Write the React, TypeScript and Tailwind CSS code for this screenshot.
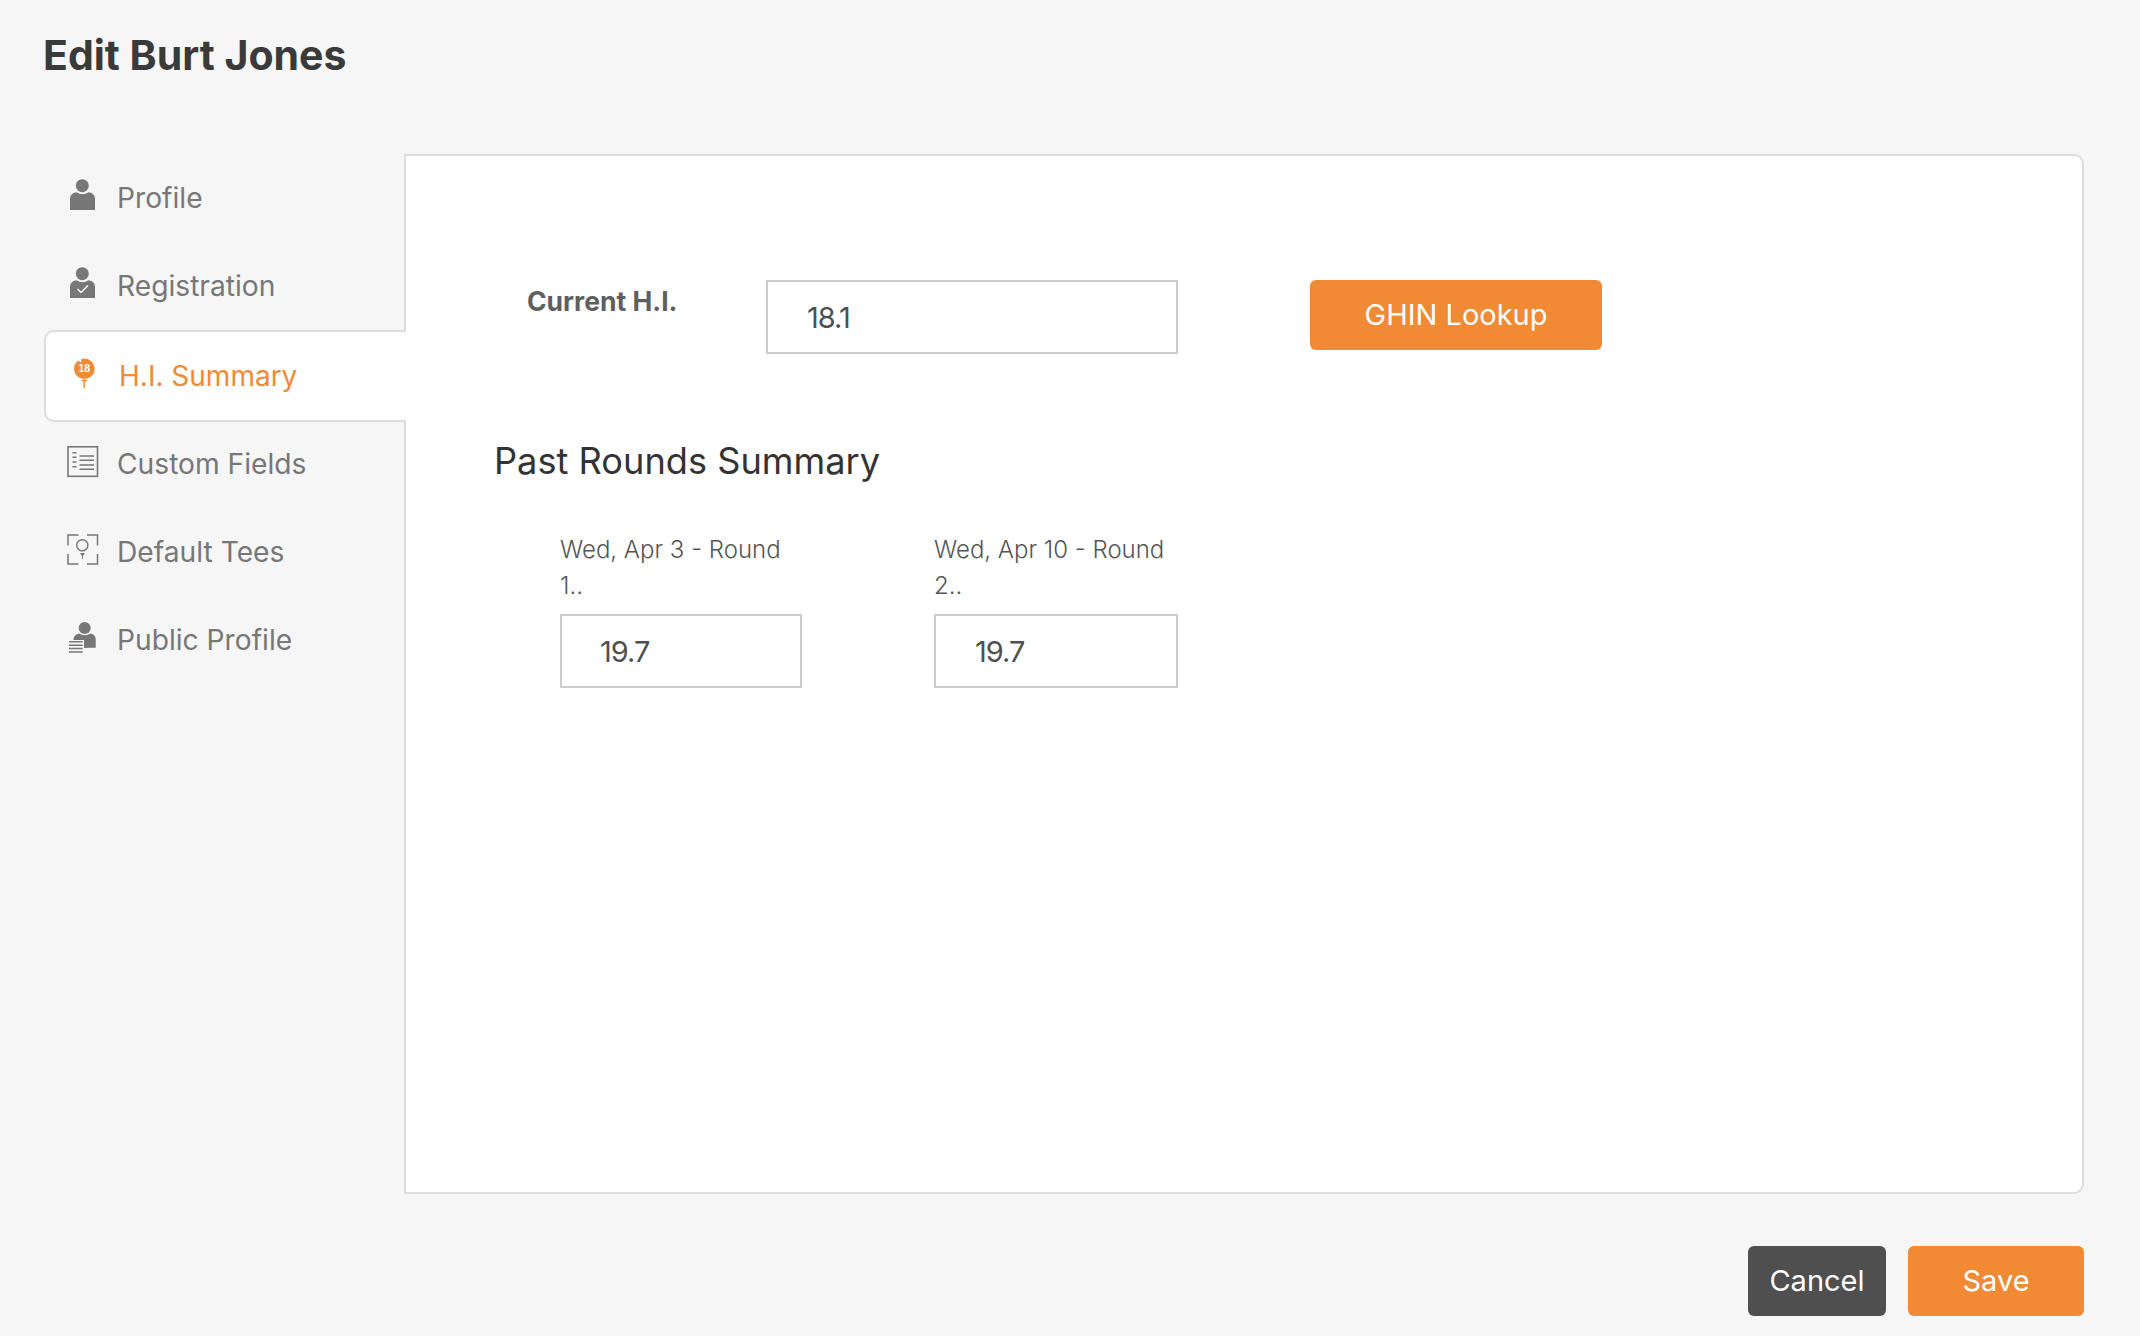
import React from "react";

const G = "#777777";
const Box = ({ children }: { children: React.ReactNode }) => (
  <svg width="32" height="36" viewBox="0 0 32 36" className="shrink-0 -mt-[8px]">{children}</svg>
);
const Person = () => (
  <>
    <circle cx="15.3" cy="9.7" r="6.5" fill={G} />
    <path d="M3 34V22.5Q3 17.5 9.5 16.3Q15.5 20 21.5 16.3Q28 17.5 28 22.5V34Z" fill={G} />
  </>
);
const ProfileIcon = () => <Box><Person /></Box>;
const RegIcon = () => (
  <Box>
    <Person />
    <path d="M10.5 25L14 28.5L21 21.5" fill="none" stroke="#f6f6f6" strokeWidth="1.5" />
  </Box>
);
const TeeBall = () => (
  <Box>
    <circle cx="17.3" cy="14.7" r="10.3" fill="#f18a34" />
    <path d="M10 6L14.5 3.8L14 8.5Z" fill="#ffffff" />
    <text x="17.3" y="18.4" textAnchor="middle" fontSize="10.5" fontWeight="700" fill="#ffffff" fontFamily="'Liberation Sans',sans-serif">18</text>
    <path d="M14.5 26.5H20M17.3 26.5V34" stroke="#f18a34" strokeWidth="1.4" fill="none" />
  </Box>
);
const FieldsIcon = () => (
  <Box>
    <rect x="1" y="4.8" width="29.5" height="29.5" fill="none" stroke={G} strokeWidth="1.6" />
    <path d="M5.5 10.7H9.5M5.5 15.3H9.5M5.5 20H9.5M5.5 24.7H9.5" stroke={G} strokeWidth="1.4" />
    <path d="M12.5 14H27M12.5 18.3H27M12.5 23H27M12.5 27.3H27" stroke={G} strokeWidth="1.4" />
  </Box>
);
const TeesIcon = () => (
  <Box>
    <path d="M11.5 5H1V15.5M1 24V34H11.5M20 34H30.5V24M30.5 15.5V5H20" fill="none" stroke={G} strokeWidth="1.5" />
    <circle cx="15.3" cy="15.3" r="5.6" fill="none" stroke={G} strokeWidth="1.4" />
    <path d="M13 23H18L16 26V29H15V26Z" fill={G} />
  </Box>
);
const PublicIcon = () => (
  <Box>
    <circle cx="17.7" cy="10" r="6" fill={G} />
    <path d="M6.5 30V21Q7 16.5 12 15.5Q17.7 19 23.5 15.5Q28.7 16.5 28.7 21V29.7Z" fill={G} />
    <rect x="1" y="22" width="16" height="14" fill="#f6f6f6" />
    <path d="M2 23.8H15.7M2 27.2H15.7M2 30.6H15.7M2 34H15.7" stroke={G} strokeWidth="1.5" />
  </Box>
);

const NavRow = ({ icon, label }: { icon: React.ReactNode; label: string }) => (
  <div className="h-[88px] flex items-center pl-[23px] gap-[18px] text-[#777777]">
    {icon}
    <span className="text-[28.2px] leading-none font-normal">{label}</span>
  </div>
);

const inputCls =
  "h-[74px] border-2 border-[#cccccc] bg-white text-[29px] tracking-[-1px] text-[#4f4f4f] outline-none";

export default function App() {
  return (
    <div
      className="w-[2140px] h-[1336px] bg-[#f6f6f6] overflow-hidden"
      style={{ fontFamily: "Inter, 'Open Sans', sans-serif" }}
    >
      <header className="h-[154px] pl-[43px] pt-[30px]">
        <h1 className="text-[41px] leading-[50px] font-bold text-[#3a3a3a]">Edit Burt Jones</h1>
      </header>

      <div className="flex pl-[44px] pr-[56px] h-[1040px]">
        <nav className="w-[360px] shrink-0 relative z-10">
          <NavRow icon={<ProfileIcon />} label="Profile" />
          <NavRow icon={<RegIcon />} label="Registration" />
          <div className="h-[92px] -mb-[2px] -mr-[2px] relative flex items-center pl-[21px] gap-[20px] bg-white border-2 border-r-0 border-[#dddddd] rounded-l-[10px] text-[#f18a34]">
            <TeeBall />
            <span className="text-[28px] leading-none font-normal">H.I. Summary</span>
          </div>
          <NavRow icon={<FieldsIcon />} label="Custom Fields" />
          <NavRow icon={<TeesIcon />} label="Default Tees" />
          <NavRow icon={<PublicIcon />} label="Public Profile" />
        </nav>

        <main className="flex-1 bg-white border-2 border-[#dddddd] rounded-r-[10px] pt-[124px] pl-[88px]">
          <div className="flex items-start">
            <label className="w-[239px] ml-[33px] pt-[3px] text-[26.5px] leading-[36px] font-bold text-[#5f5f5f]">Current H.I.</label>
            <input readOnly value="18.1" className={`${inputCls} w-[412px] pl-[39px] mr-[132px]`} />
            <button className="w-[292px] h-[70px] rounded-[6px] bg-[#f18a34] text-white text-[29px]">GHIN Lookup</button>
          </div>

          <h2 className="mt-[82px] text-[36.2px] leading-[50px] text-[#333333]">Past Rounds Summary</h2>

          <div className="flex mt-[46px] ml-[66px]">
            <div className="w-[374px]">
              <p className="text-[24px] font-light leading-[36px] text-[#555555] whitespace-nowrap">Wed, Apr 3 - Round<br />1..</p>
              <input readOnly value="19.7" className={`${inputCls} w-[242px] pl-[38px] mt-[10px] block`} />
            </div>
            <div className="w-[274px]">
              <p className="text-[24px] font-light leading-[36px] text-[#555555] whitespace-nowrap">Wed, Apr 10 - Round<br />2..</p>
              <input readOnly value="19.7" className={`${inputCls} w-[244px] pl-[39px] mt-[10px] block`} />
            </div>
          </div>
        </main>
      </div>

      <footer className="flex justify-end gap-[22px] pr-[56px] mt-[52px]">
        <button className="w-[138px] h-[70px] rounded-[6px] bg-[#4f4f4f] text-white text-[29px]">Cancel</button>
        <button className="w-[176px] h-[70px] rounded-[6px] bg-[#f18a34] text-white text-[29px]">Save</button>
      </footer>
    </div>
  );
}
